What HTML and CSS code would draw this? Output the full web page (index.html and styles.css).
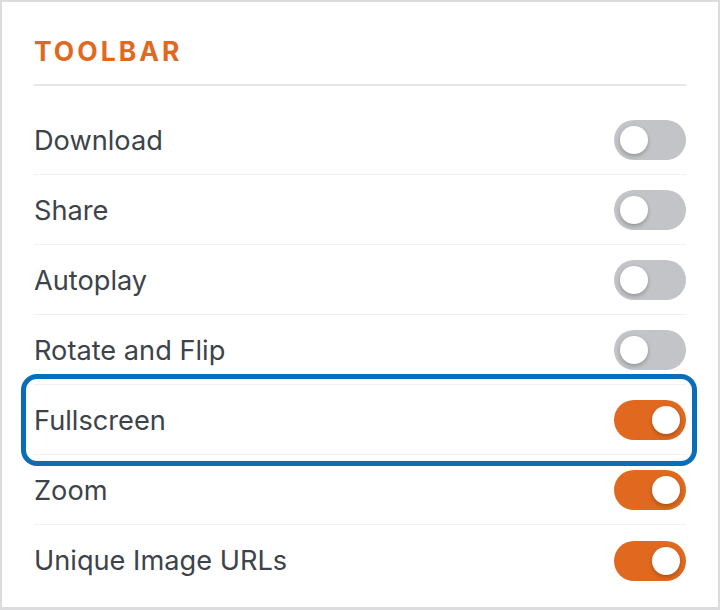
FILE: index.html
```html
<!DOCTYPE html>
<html>
<head>
  <title>Toolbar Settings</title>
  <link rel="stylesheet" href="styles.css">
</head>
<body>
  <div class="panel">
    <h2 class="panel-title">Toolbar</h2>
    <ul class="options">
      <li class="option"><span>Download</span><span class="toggle"></span></li>
      <li class="option"><span>Share</span><span class="toggle"></span></li>
      <li class="option"><span>Autoplay</span><span class="toggle"></span></li>
      <li class="option"><span>Rotate and Flip</span><span class="toggle"></span></li>
      <li class="option highlighted"><span>Fullscreen</span><span class="toggle on"></span></li>
      <li class="option"><span>Zoom</span><span class="toggle on"></span></li>
      <li class="option"><span>Unique Image URLs</span><span class="toggle on"></span></li>
    </ul>
  </div>
</body>
</html>
```

FILE: styles.css
```css
body {
  margin: 0;
  background-color: white;
  font-family: Inter, "Noto Sans", sans-serif;
  color: #3c434a;
}

.panel {
  box-sizing: border-box;
  width: 720px;
  height: 610px;
  border: 2px solid #dcdcde;
  border-bottom-width: 3px;
  padding: 0 32px;
}

.panel-title {
  margin: 0;
  padding: 31px 0 15px;
  border-bottom: 2px solid #e6e6e6;
  color: #e0691f;
  font-size: 26.5px;
  font-weight: 700;
  line-height: 36px;
  letter-spacing: 3px;
  text-transform: uppercase;
}

.options {
  list-style: none;
  margin: 19px 0 0;
  padding: 0;
}

.option {
  position: relative;
  display: flex;
  align-items: center;
  justify-content: space-between;
  height: 70px;
  box-sizing: border-box;
  border-bottom: 1px solid #f0f0f1;
  padding-top: 1px;
  font-size: 27.2px;
}

.option:last-child {
  border-bottom: none;
}

.highlighted::after {
  content: "";
  position: absolute;
  left: -13px;
  right: -11px;
  top: -11px;
  bottom: -12px;
  border: 5px solid #0a6db8;
  border-radius: 16px;
  box-shadow: inset 0 0 3px rgba(0, 0, 0, 0.08);
}

.toggle {
  position: relative;
  width: 72px;
  height: 40px;
  border-radius: 20px;
  background-color: #c3c4c7;
}

.toggle::before {
  content: "";
  position: absolute;
  top: 6px;
  left: 6px;
  width: 28px;
  height: 28px;
  border-radius: 50%;
  background-color: white;
  box-shadow: 0 2px 4px rgba(0, 0, 0, 0.25);
}

.toggle.on {
  background-color: #e0691f;
}

.toggle.on::before {
  left: 38px;
}
```
